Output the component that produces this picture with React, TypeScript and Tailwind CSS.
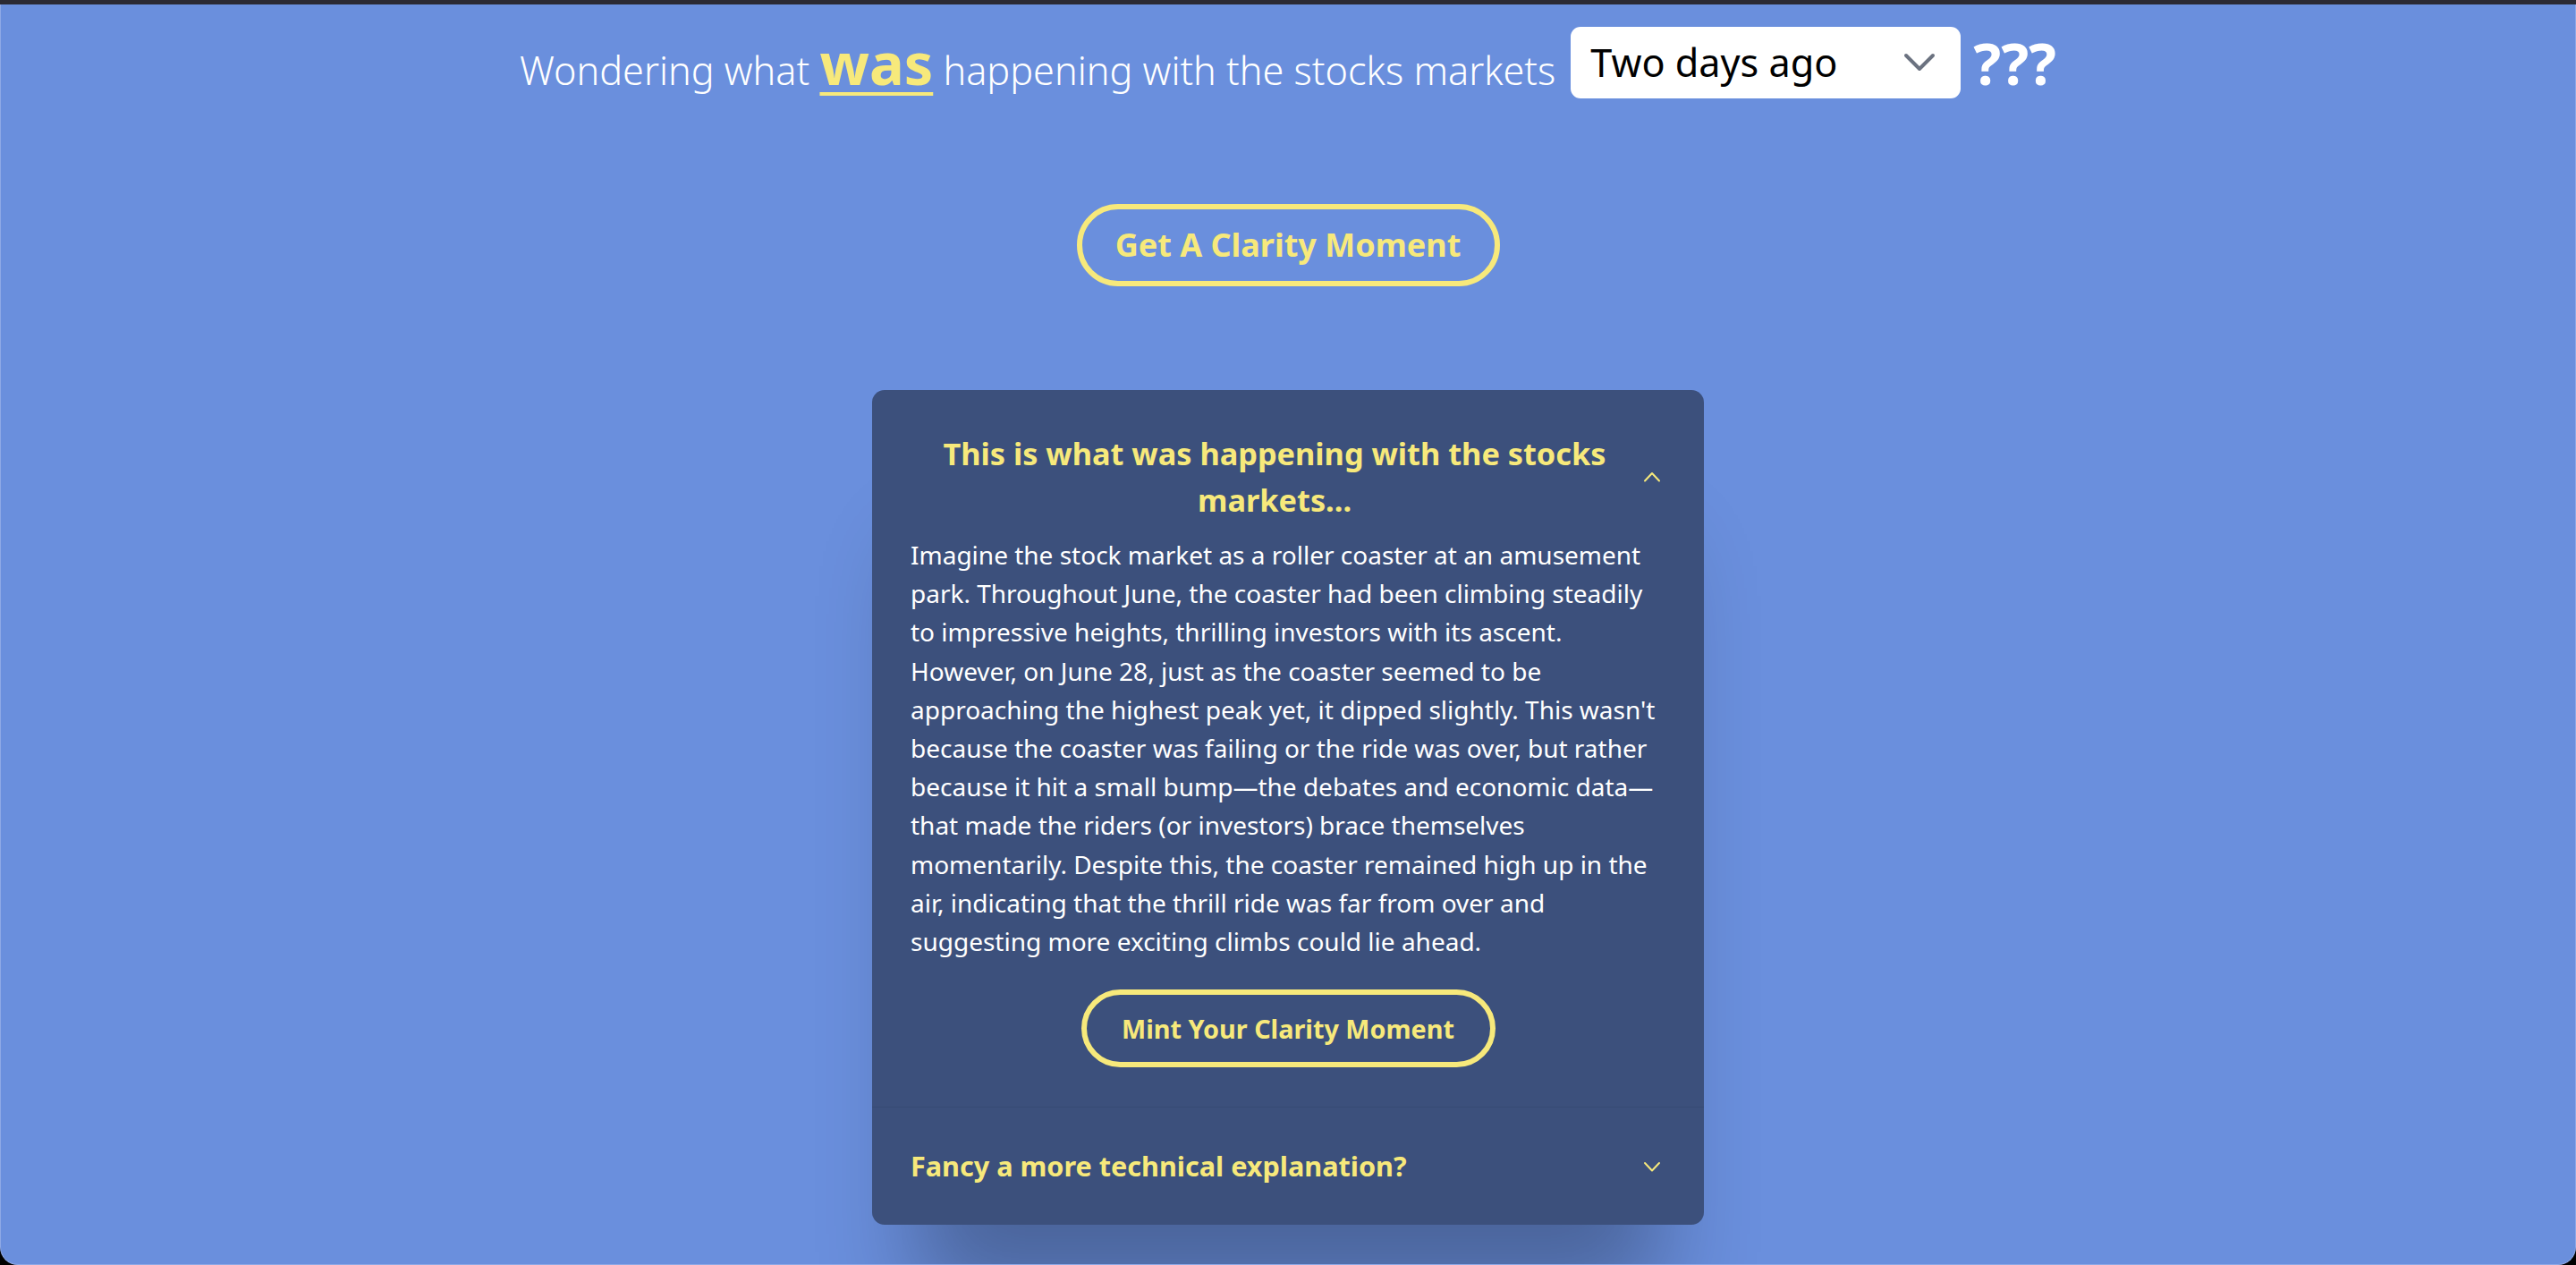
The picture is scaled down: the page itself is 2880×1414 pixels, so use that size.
import { useState } from 'react'

const story =
  "Imagine the stock market as a roller coaster at an amusement park. Throughout June, the coaster had been climbing steadily to impressive heights, thrilling investors with its ascent. However, on June 28, just as the coaster seemed to be approaching the highest peak yet, it dipped slightly. This wasn't because the coaster was failing or the ride was over, but rather because it hit a small bump\u2014the debates and economic data\u2014that made the riders (or investors) brace themselves momentarily. Despite this, the coaster remained high up in the air, indicating that the thrill ride was far from over and suggesting more exciting climbs could lie ahead."

function Chevron({ up }: { up?: boolean }) {
  return (
    <svg width="30" height="30" viewBox="0 0 30 30" fill="none" className="shrink-0">
      <path
        d={up ? 'M7 19.5l8-8.5 8 8.5' : 'M7 11l8 8.5 8-8.5'}
        stroke="#f7e97b"
        strokeWidth="2"
        strokeLinecap="round"
        strokeLinejoin="round"
      />
    </svg>
  )
}

export default function App() {
  const [when, setWhen] = useState('two')
  const [open, setOpen] = useState(true)
  const [techOpen, setTechOpen] = useState(false)

  return (
    <div className="h-[1414px] overflow-hidden bg-black font-['Noto_Sans',sans-serif]">
      <div className="h-[5px] bg-[#2b2a33]" />
      <div className="h-[1409px] rounded-b-[20px] border-x border-b border-[#8ea8e6] bg-[#6a8fdd] overflow-hidden">
        <div className="mt-[25px] flex items-center justify-center">
          <p className="text-[43.2px] leading-none font-light text-white whitespace-nowrap">
            Wondering what{' '}
            <span className="text-[64.8px] font-bold text-[#f7e97b] underline decoration-[4px] underline-offset-[8px]">
              was
            </span>{' '}
            happening with the stocks markets
          </p>
          <div className="relative ml-[17px]">
            <select
              value={when}
              onChange={(e) => setWhen(e.target.value)}
              className="h-[80px] w-[436px] appearance-none rounded-[11px] bg-white pl-[22px] text-[43.2px] text-black outline-none font-['Noto_Sans',sans-serif]"
            >
              <option value="today">Today</option>
              <option value="yesterday">Yesterday</option>
              <option value="two">Two days ago</option>
            </select>
            <svg
              className="pointer-events-none absolute right-[28px] top-[29px]"
              width="36"
              height="22"
              viewBox="0 0 36 22"
              fill="none"
            >
              <path d="M3 3l15 15 15-15" stroke="#6b7280" strokeWidth="4" strokeLinecap="round" strokeLinejoin="round" />
            </svg>
          </div>
          <span className="ml-[14px] text-[64.8px] leading-none font-bold text-white">???</span>
        </div>

        <div className="mt-[118px] flex justify-center">
          <button className="h-[92px] w-[473px] rounded-full border-[6px] border-[#f7e97b] text-[36px] font-bold text-[#f7e97b]">
            Get A Clarity Moment
          </button>
        </div>

        <div className="mx-auto mt-[116px] w-[930px] rounded-[14px] bg-[#3c507c] shadow-[0_130px_100px_-50px_rgba(0,0,0,0.3)]">
          <div>
            <button
              onClick={() => setOpen(!open)}
              className="flex w-full items-center px-[43px] pt-[45px] pb-[15px]"
            >
              <span className="flex-1 text-center text-[34.3px] leading-[51.5px] font-bold text-[#f7e97b]">
                This is what was happening with the stocks markets...
              </span>
              <Chevron up={open} />
            </button>
            {open ? (
              <div className="px-[43px] pb-[44px]">
                <p className="text-[28px] leading-[43.2px] text-white">{story}</p>
                <div className="mt-[32px] flex justify-center">
                  <button className="h-[87px] w-[463px] rounded-full border-[6px] border-[#f7e97b] text-[28.8px] font-bold text-[#f7e97b]">
                    Mint Your Clarity Moment
                  </button>
                </div>
              </div>
            ) : null}
          </div>
          <div className="border-t border-[#374a74]">
            <button
              onClick={() => setTechOpen(!techOpen)}
              className="flex w-full items-center justify-between px-[43px] py-[44px]"
            >
              <span className="text-[30.6px] leading-[43.2px] font-bold text-[#f7e97b]">
                Fancy a more technical explanation?
              </span>
              <Chevron up={techOpen} />
            </button>
          </div>
        </div>
      </div>
    </div>
  )
}
